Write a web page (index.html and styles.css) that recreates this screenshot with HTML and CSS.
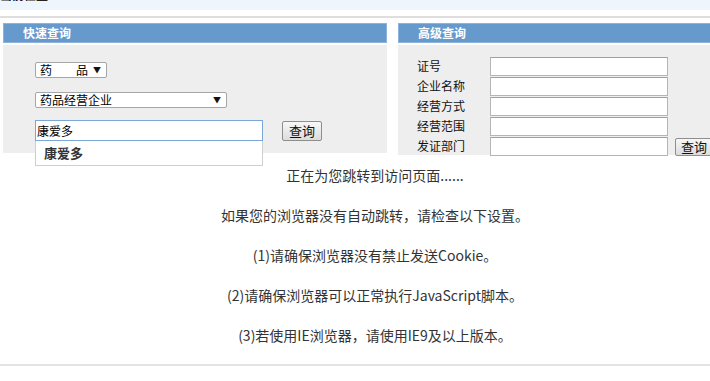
FILE: index.html
```html
<!DOCTYPE html>
<html lang="zh-CN">
<head>
<meta charset="utf-8">
<title>查询</title>
<link rel="stylesheet" href="styles.css">
</head>
<body>
<div class="page">
  <div class="topbar"><span class="crumb">当前位置</span></div>
  <div class="topgap"></div>
  <div class="panels">
    <section class="panel panel-left">
      <h2 class="panel-head">快速查询</h2>
      <div class="panel-body left-body">
        <div class="fake-select sel-small"><span>药　　品</span><span class="arrow">▼</span></div>
        <div class="fake-select sel-wide"><span>药品经营企业</span><span class="arrow">▼</span></div>
        <div class="search-row">
          <div class="search-box">
            <div class="text-input focused">康爱多</div>
            <div class="suggest"><span>康爱多</span></div>
          </div>
          <button class="btn">查询</button>
        </div>
      </div>
    </section>
    <section class="panel panel-right">
      <h2 class="panel-head">高级查询</h2>
      <div class="panel-body right-body">
        <div class="form-row"><span class="label">证号</span><span class="field"></span></div>
        <div class="form-row"><span class="label">企业名称</span><span class="field"></span></div>
        <div class="form-row"><span class="label">经营方式</span><span class="field"></span></div>
        <div class="form-row"><span class="label">经营范围</span><span class="field"></span></div>
        <div class="form-row"><span class="label">发证部门</span><span class="field"></span><button class="btn btn-small">查询</button></div>
      </div>
    </section>
  </div>
  <div class="messages">
    <p>正在为您跳转到访问页面......</p>
    <p>如果您的浏览器没有自动跳转，请检查以下设置。</p>
    <p>(1)请确保浏览器没有禁止发送Cookie。</p>
    <p>(2)请确保浏览器可以正常执行JavaScript脚本。</p>
    <p>(3)若使用IE浏览器，请使用IE9及以上版本。</p>
  </div>
  <div class="bottom-rule"></div>
</div>
</body>
</html>
```

FILE: styles.css
```css
html, body {
  margin: 0;
  padding: 0;
  overflow: hidden;
  background: #fff;
}
body {
  font-family: "Noto Sans CJK SC", "Noto Sans", sans-serif;
  color: #000;
}
.page {
  width: 750px;
}
.topbar {
  height: 10px;
  background: #eef5fd;
  overflow: hidden;
}
.crumb {
  display: block;
  margin-top: -12px;
  font-size: 12px;
  line-height: 14px;
  font-weight: bold;
  color: #222;
}
.topgap {
  height: 6px;
  border-bottom: 2px solid #dedede;
  margin-bottom: 5px;
}
.panels {
  display: flex;
  align-items: flex-start;
  gap: 11px;
  padding-left: 3px;
  height: 132px;
}
.panel-left { width: 384px; }
.panel-right { width: 349px; }
.panel-head {
  margin: 0;
  box-sizing: border-box;
  height: 20px;
  background: #6699cc;
  border: 1px solid #8db2db;
  color: #fff;
  font-size: 12px;
  font-weight: bold;
  line-height: 18px;
  padding-left: 19px;
}
.panel-body {
  margin-top: 2px;
  background: #eeeeee;
  box-sizing: border-box;
}
.left-body {
  height: 108px;
  padding: 17px 0 0 32px;
}
.fake-select {
  box-sizing: border-box;
  height: 16px;
  background: #fff;
  border: 1px solid #a6a6a6;
  border-radius: 2px;
  display: flex;
  justify-content: space-between;
  align-items: center;
  font-size: 12px;
  line-height: 14px;
  padding: 0 5px 0 4px;
}
.fake-select .arrow {
  font-size: 8px;
  color: #111;
}
.sel-small { width: 72px; }
.sel-wide { width: 192px; margin-top: 14px; }
.search-row {
  display: flex;
  align-items: flex-start;
  margin-top: 12px;
}
.search-box {
  position: relative;
  width: 228px;
}
.text-input {
  box-sizing: border-box;
  height: 21px;
  background: #fff;
  border: 1px solid #a9a9a9;
  font-size: 12px;
  line-height: 19px;
  padding-left: 1px;
}
.text-input.focused {
  border-color: #7aa6d8;
}
.suggest {
  position: absolute;
  top: 21px;
  left: 0;
  width: 228px;
  height: 25px;
  box-sizing: border-box;
  background: #fff;
  border: 1px solid #cfcfcf;
  border-top: none;
  font-size: 13px;
  font-weight: bold;
  color: #333;
  line-height: 24px;
  padding-left: 8px;
  z-index: 2;
}
.btn {
  box-sizing: border-box;
  font-family: "Noto Sans CJK SC", "Noto Sans", sans-serif;
  font-size: 13px;
  line-height: 16px;
  padding: 0;
  color: #111;
  background: linear-gradient(#f7f7f7, #dcdcdc);
  border: 1px solid #8e8e8e;
  border-radius: 2px;
}
.search-row .btn {
  width: 40px;
  height: 20px;
  margin-left: 19px;
  margin-top: 1px;
}
.right-body {
  height: 110px;
  padding: 11px 0 0 19px;
}
.form-row {
  display: flex;
  align-items: center;
  height: 20px;
}
.label {
  width: 73px;
  font-size: 12px;
  line-height: 14px;
  color: #111;
}
.field {
  box-sizing: border-box;
  width: 178px;
  height: 19px;
  background: #fff;
  border: 1px solid #b5b5b5;
  border-top-color: #a0a0a0;
}
.btn-small {
  width: 38px;
  height: 18px;
  margin-left: 7px;
  margin-top: 2px;
}
.messages {
  text-align: center;
  color: #333;
  font-size: 14px;
}
.messages p {
  margin: 0;
  line-height: 40px;
}
.bottom-rule {
  margin-top: 9px;
  border-top: 2px solid #e3e3e3;
}
```
